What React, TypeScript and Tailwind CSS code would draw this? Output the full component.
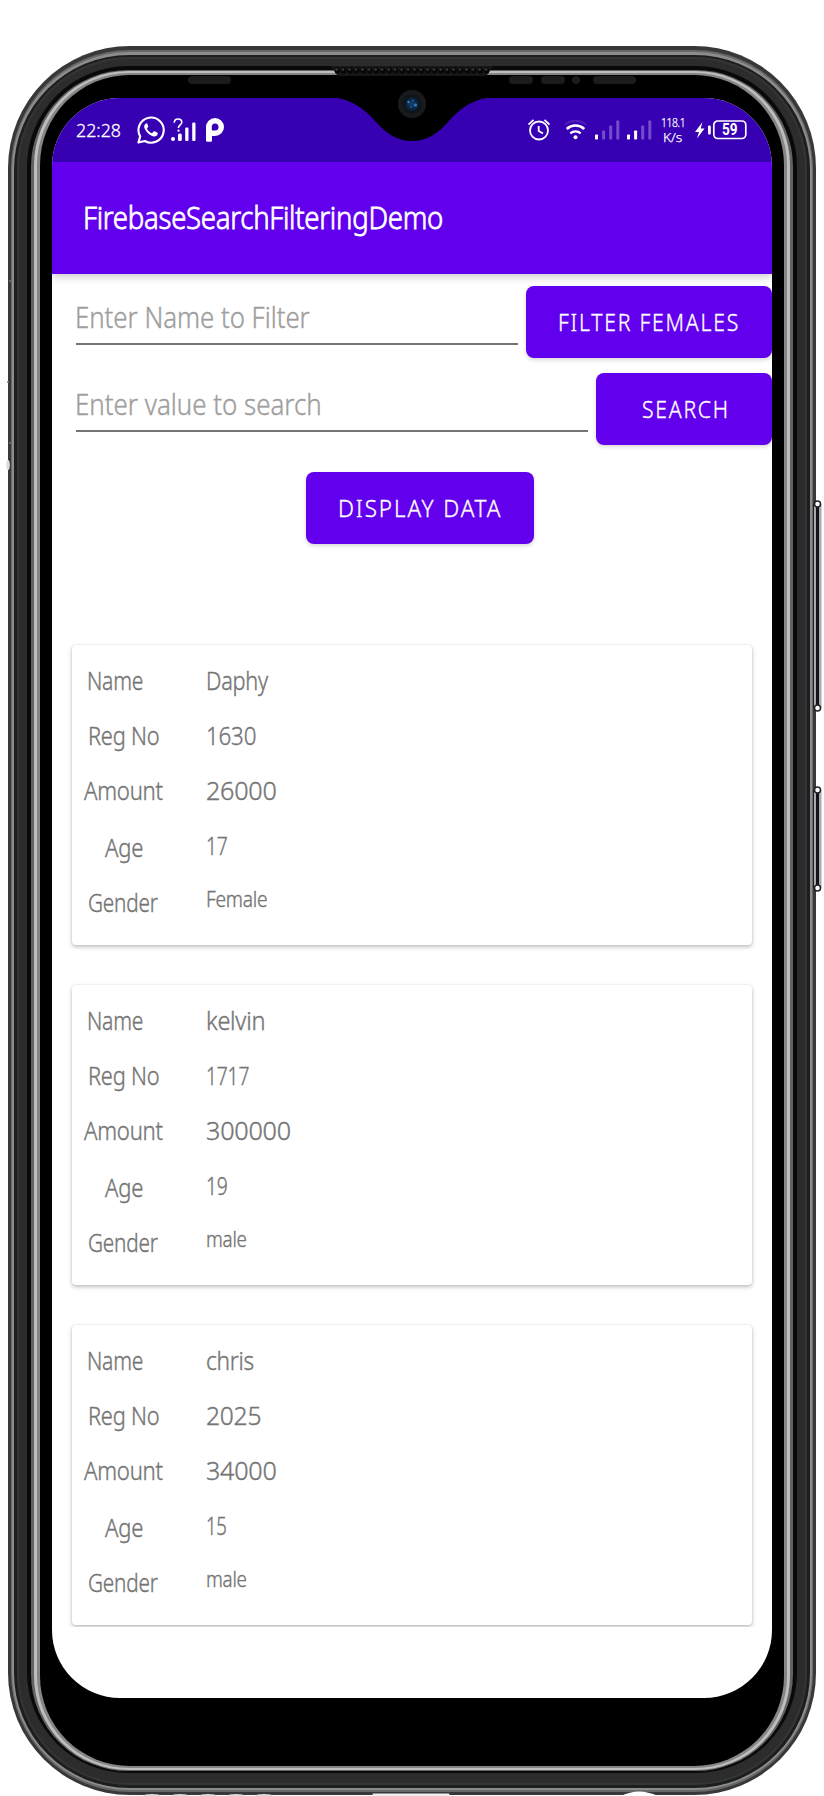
import { useLayoutEffect, useRef, useState } from "react";

type FitProps = { children: string; width: number; className?: string };

/** A single line of text condensed or expanded to an exact width. */
function Fit({ children, width, className = "" }: FitProps) {
  const ref = useRef<HTMLSpanElement>(null);
  const [scale, setScale] = useState(1);
  useLayoutEffect(() => {
    if (ref.current) setScale(width / ref.current.offsetWidth);
  }, [width, children]);
  return (
    <span className={`block whitespace-nowrap ${className}`} style={{ width }}>
      <span ref={ref} className="inline-block origin-left" style={{ transform: `scaleX(${scale})` }}>
        {children}
      </span>
    </span>
  );
}

function WhatsApp() {
  return (
    <svg className="h-7 w-7" viewBox="0 0 28 28" fill="none">
      <path d="M1.4 26.6 3.2 20.4A12.6 12.6 0 1 1 7.8 25Z" stroke="white" strokeWidth="2.1" strokeLinejoin="round" />
      <path d="M9.2 7.4c-1.3.5-2.2 1.8-2 3.6.4 3 4.7 8.3 9.3 9.4 2 .4 3.9-.7 4.2-2.7.1-.6 0-.8-.5-1.1l-2.6-1.3c-.5-.2-.8-.1-1.1.3l-1 1.2c-.3.4-.7.4-1.2.1-1.9-.9-3.2-2.2-4.2-4-.2-.4-.1-.7.2-1 1-1.1 1.1-1.4.8-2.2l-.9-2.1c-.2-.4-.5-.4-1-.2Z" fill="white" />
    </svg>
  );
}

function UnknownSignal() {
  return (
    <svg className="h-6 w-[25px]" viewBox="0 0 25 24">
      <g fill="white">
        <circle cx="2" cy="21" r="2" />
        <rect x="7" y="15.500" width="3.800" height="7.500" rx="1.500" />
        <rect x="14.200" y="9.500" width="3.300" height="13.500" rx="1.200" />
        <rect x="21.200" y="4.500" width="3.300" height="18.500" rx="1.200" />
        <circle cx="7.500" cy="12.700" r="1.100" />
      </g>
      <path d="M3.200 4.700C3.400 2.200 5 1 7 1s3.800 1.200 3.800 3.300C10.800 6.800 7.400 6.900 7.400 10" fill="none" stroke="white" strokeWidth="1.600" />
    </svg>
  );
}

function Parking() {
  return (
    <svg className="h-6 w-[18px]" viewBox="0 0 18 24">
      <path fillRule="evenodd" d="M0 10V9a9 9 0 1 1 9 9H6v4.500a1.200 1.200 0 0 1-1.200 1.200H1.200A1.200 1.200 0 0 1 0 22.500ZM9 5.500A3.500 3.500 0 0 0 5.800 9v2.500c0 .7.4 1 1 1H9a3.500 3.500 0 0 0 0-7Z" fill="white" />
    </svg>
  );
}

function Alarm() {
  return (
    <svg className="h-6 w-6" viewBox="0 0 24 24" fill="none" stroke="white">
      <circle cx="12" cy="12.500" r="9" strokeWidth="1.800" />
      <path d="M11.700 8v5l4.300 2.600M1.500 6.600 6.500 1.800M22.500 6.600 17.500 1.800" strokeWidth="1.800" />
    </svg>
  );
}

function Wifi() {
  return (
    <svg className="h-5 w-[23px]" viewBox="0 0 23 20" fill="none" stroke="white">
      <path d="M1 4.600a16 16 0 0 1 21 0" strokeWidth="2" opacity=".12" />
      <path d="M2.700 9a13 13 0 0 1 17.600 0" strokeWidth="2.500" />
      <path d="M6.300 13.300a8 8 0 0 1 10.400 0" strokeWidth="2.300" />
      <circle cx="11.500" cy="17.300" r="2" fill="white" stroke="none" />
    </svg>
  );
}

function Signal({ bars }: { bars: number }) {
  return (
    <svg className="h-5 w-[25px]" viewBox="0 0 25 20" fill="white">
      {[5, 9, 14, 19].map((h, i) => (
        <rect key={h} x={i * 7.1} y={19.5 - h} width="3" height={h} rx=".8" opacity={i < bars ? 1 : 0.3} />
      ))}
    </svg>
  );
}

function StatusBar() {
  return (
    <div className="flex h-16 shrink-0 bg-[#3700b3] pt-5 pl-6 text-white">
      <Fit width={45} className="-mt-px text-[19px] leading-[26px] [-webkit-text-stroke:0.3px]">22:28</Fit>
      <div className="-mt-[2px] ml-4"><WhatsApp /></div>
      <div className="ml-[6px]"><UnknownSignal /></div>
      <div className="ml-[10px]"><Parking /></div>
      <div className="ml-[303px]"><Alarm /></div>
      <div className="mt-[2px] ml-[13px]"><Wifi /></div>
      <div className="mt-[2px] ml-[8px]"><Signal bars={1} /></div>
      <div className="mt-[2px] ml-[7px]"><Signal bars={2} /></div>
      <div className="-mt-[3px] ml-[9px] text-[13px] leading-[15px] [-webkit-text-stroke:0.25px]">
        <Fit width={24} className="tracking-[-0.04em]">118.1</Fit>
        <Fit width={19} className="ml-[2px]">K/s</Fit>
      </div>
      <svg className="mt-[2px] ml-[10px] h-5 w-[54px] shrink-0" viewBox="0 0 54 20">
        <path d="M7.500 2 0 12h4L2 18.500 9.500 8.500H5.700Z" fill="white" />
        <rect x="13" y="5.500" width="2.800" height="9" rx="1" fill="white" />
        <rect x="18.800" y="1" width="32" height="17.500" rx="4" fill="none" stroke="white" strokeWidth="1.700" />
        <text x="34.800" y="15.200" textAnchor="middle" fontFamily="Roboto" fontWeight="700" fontSize="16" textLength="15.500" lengthAdjust="spacingAndGlyphs" fill="white">59</text>
      </svg>
    </div>
  );
}

type ButtonProps = { children: string; box: string; width: number };

function Button({ children, box, width }: ButtonProps) {
  return (
    <button className={`flex h-[72px] items-center justify-center rounded-[8px] bg-[#6200ee] text-white shadow-[0_2px_4px_rgba(0,0,0,0.16)] ${box}`}>
      <Fit width={width} className="text-left text-[23.500px] leading-[32px] tracking-[2px] [-webkit-text-stroke:0.35px]">{children}</Fit>
    </button>
  );
}

function Field({ placeholder, width }: { placeholder: string; width: number }) {
  return (
    <div className="mb-[13px] flex-1 border-b-2 border-[#757575] text-[#9e9e9e]">
      <Fit width={width} className="-ml-px pt-[11px] text-[28.500px] leading-[40px] [-webkit-text-stroke:0.4px]">{placeholder}</Fit>
    </div>
  );
}

type Cell = [text: string, width: number];
type Person = { name: Cell; reg: Cell; amount: Cell; age: Cell; gender: Cell };

const people: Person[] = [
  { name: ["Daphy", 62], reg: ["1630", 50], amount: ["26000", 71], age: ["17", 22], gender: ["Female", 61] },
  { name: ["kelvin", 59], reg: ["1717", 43], amount: ["300000", 85], age: ["19", 22], gender: ["male", 41] },
  { name: ["chris", 48], reg: ["2025", 55], amount: ["34000", 71], age: ["15", 21], gender: ["male", 41] },
];

function Row({ label, indent, value, small }: { label: Cell; indent: string; value: Cell; small?: boolean }) {
  return (
    <div className="flex h-[55px]">
      <div className={`w-[134px] ${indent}`}>
        <Fit width={label[1]}>{label[0]}</Fit>
      </div>
      <Fit width={value[1]} className={small ? "text-[22px] leading-[27px]" : ""}>{value[0]}</Fit>
    </div>
  );
}

function Card({ person }: { person: Person }) {
  return (
    <div className="h-[300px] rounded-[4px] bg-white pt-[20px] text-[25.500px] leading-[30px] tracking-[-0.01em] text-[#757575] shadow-[0_2px_4px_rgba(0,0,0,0.25),0_0_2px_rgba(0,0,0,0.1)] [-webkit-text-stroke:0.4px]">
      <Row label={["Name", 56]} indent="pl-[15px]" value={person.name} />
      <Row label={["Reg No", 71]} indent="pl-[16px]" value={person.reg} />
      <Row label={["Amount", 79]} indent="pl-[12px]" value={person.amount} />
      <Row label={["Age", 38]} indent="pt-[2px] pl-[33px]" value={person.age} />
      <Row label={["Gender", 70]} indent="pt-[2px] pl-[16px]" value={person.gender} small />
    </div>
  );
}

function Screen() {
  return (
    <div className="flex h-[1600px] w-[720px] flex-col overflow-hidden rounded-[68px] bg-white">
      <StatusBar />
      <header className="relative flex h-28 shrink-0 bg-[#6200ee] pt-[33px] pl-8 text-white shadow-[0_3px_8px_rgba(0,0,0,0.2)]">
        <Fit width={360} className="-ml-px text-[31px] leading-[44px] tracking-[-0.01em] [-webkit-text-stroke:0.8px]">FirebaseSearchFilteringDemo</Fit>
      </header>
      <div className="mt-3 flex h-[72px] gap-2 pl-6">
        <Field placeholder="Enter Name to Filter" width={235} />
        <Button box="w-[246px]" width={182}>FILTER FEMALES</Button>
      </div>
      <div className="mt-[15px] flex h-[72px] gap-2 pl-6">
        <Field placeholder="Enter value to search" width={247} />
        <Button box="w-[176px] pl-[4px]" width={88}>SEARCH</Button>
      </div>
      <div className="mt-[27px] pl-[254px]">
        <Button box="w-[228px]" width={164}>DISPLAY DATA</Button>
      </div>
      <div className="mt-[86px] flex h-[997px] flex-col gap-10 overflow-hidden px-5 pt-[15px]">
        {people.map((p) => (
          <Card key={p.name[0]} person={p} />
        ))}
      </div>
    </div>
  );
}

function FrameDetails() {
  return (
    <svg className="absolute top-0 left-0 h-[1796px] w-[824px]" viewBox="0 0 824 1796">
      <defs>
        <pattern id="mesh" width="6.500" height="9" patternUnits="userSpaceOnUse" x="334" y="66">
          <circle cx="3.200" cy="4.500" r="2.900" fill="#050505" />
          <circle cx="2.600" cy="3.600" r="1.300" fill="#3a3a3a" />
        </pattern>
        <radialGradient id="lens">
          <stop offset="0" stopColor="#17436f" />
          <stop offset="1" stopColor="#0a1b31" />
        </radialGradient>
      </defs>
      <path d="M325 97C352 97 366 111 375 121C386 133 396 141 412 141C428 141 438 133 449 121C458 111 472 97 499 97Z" fill="black" />
      <path d="M331 66H493L488 74Q486 76 483 76H341Q338 76 336 74Z" fill="#161616" />
      <rect x="335" y="66" width="154" height="9" fill="url(#mesh)" />
      <g fill="#1c1c1c">
        <rect x="188" y="76" width="43" height="8" rx="4" />
        <rect x="509" y="76" width="24" height="8" rx="4" />
        <rect x="541" y="76" width="24" height="8" rx="4" />
        <circle cx="576" cy="80" r="4" />
        <rect x="593" y="76" width="43" height="8" rx="4" />
      </g>
      <circle cx="412" cy="104" r="14" fill="#191a1c" />
      <circle cx="412" cy="104" r="10" fill="#10151b" />
      <circle cx="412" cy="104" r="7" fill="url(#lens)" />
      <g fill="#2b80cc">
        <circle cx="408.500" cy="102" r="1.200" />
        <circle cx="413" cy="100.500" r=".8" />
        <circle cx="415.500" cy="105" r="1.600" />
        <circle cx="411" cy="107" r=".7" />
      </g>
      {[[504, 708], [790, 888]].map(([a, b]) => (
        <g key={a}>
          <rect x="813.500" y={a} width="8" height={b - a} fill="#aaa9b2" />
          <rect x="813" y={a} width="1" height={b - a} fill="#222" />
          <rect x="816" y={a} width="3" height={b - a} fill="#111318" />
          <circle cx="817.500" cy={a} r="3" fill="white" stroke="#222" strokeWidth="1.500" />
          <circle cx="817.500" cy={b} r="3" fill="white" stroke="#222" strokeWidth="1.500" />
        </g>
      ))}
      <g fill="#777">
        <circle cx="10" cy="281" r="1" />
        <circle cx="8" cy="382" r="1" />
        <circle cx="10" cy="443" r="1" />
        <ellipse cx="8" cy="465" rx="1.800" ry="5" fill="#ddd" />
      </g>
      <path d="M372 1796L373 1793.500H449L450 1796Z" fill="#eee" />
      <path d="M621 1796Q630 1791.500 639 1791.500T658 1796Z" fill="#fff" />
      {[152, 180, 208, 236, 264].map((x) => (
        <ellipse key={x} cx={x} cy="1796" rx="9" ry="2" fill="#ddd" />
      ))}
    </svg>
  );
}

export default function App() {
  return (
    <main className="relative h-[1796px] w-[824px] overflow-hidden bg-white pt-[46px] pl-2 font-['Noto_Sans',sans-serif] font-light">
      <div className="h-[1749px] w-[808px] rounded-[122px] bg-[#383838] px-[3px] pt-[4px] pb-[3px]">
        <div className="h-full rounded-[119px] border-x border-y-2 border-[#686868] bg-[#8c8c8b] px-[2px] pt-[3px] pb-[2px]">
          <div className="h-full rounded-[115px] bg-[#1c1f21] p-[3px] pt-[2px]">
            <div className="h-full rounded-[112px] border-2 border-[#353535] bg-[#2c2c2c] px-[8px] pt-[7px] pb-[10px]">
              <div className="h-full rounded-[101px] bg-[#090909] px-[4px] pt-[4px] pb-[2px]">
                <div className="h-full rounded-[97px] bg-[#626262] px-[3px] pt-px pb-px">
                  <div className="h-full rounded-[94px] bg-[#bdbdbd] px-[3px] pt-[2px] pb-[2px]">
                    <div className="h-full rounded-[92px] bg-[#858585] px-[3px] pt-[2px] pb-[2px]">
                      <div className="h-full rounded-[90px] bg-black px-[12px] pt-[23px]">
                        <Screen />
                      </div>
                    </div>
                  </div>
                </div>
              </div>
            </div>
          </div>
        </div>
      </div>
      <FrameDetails />
    </main>
  );
}
